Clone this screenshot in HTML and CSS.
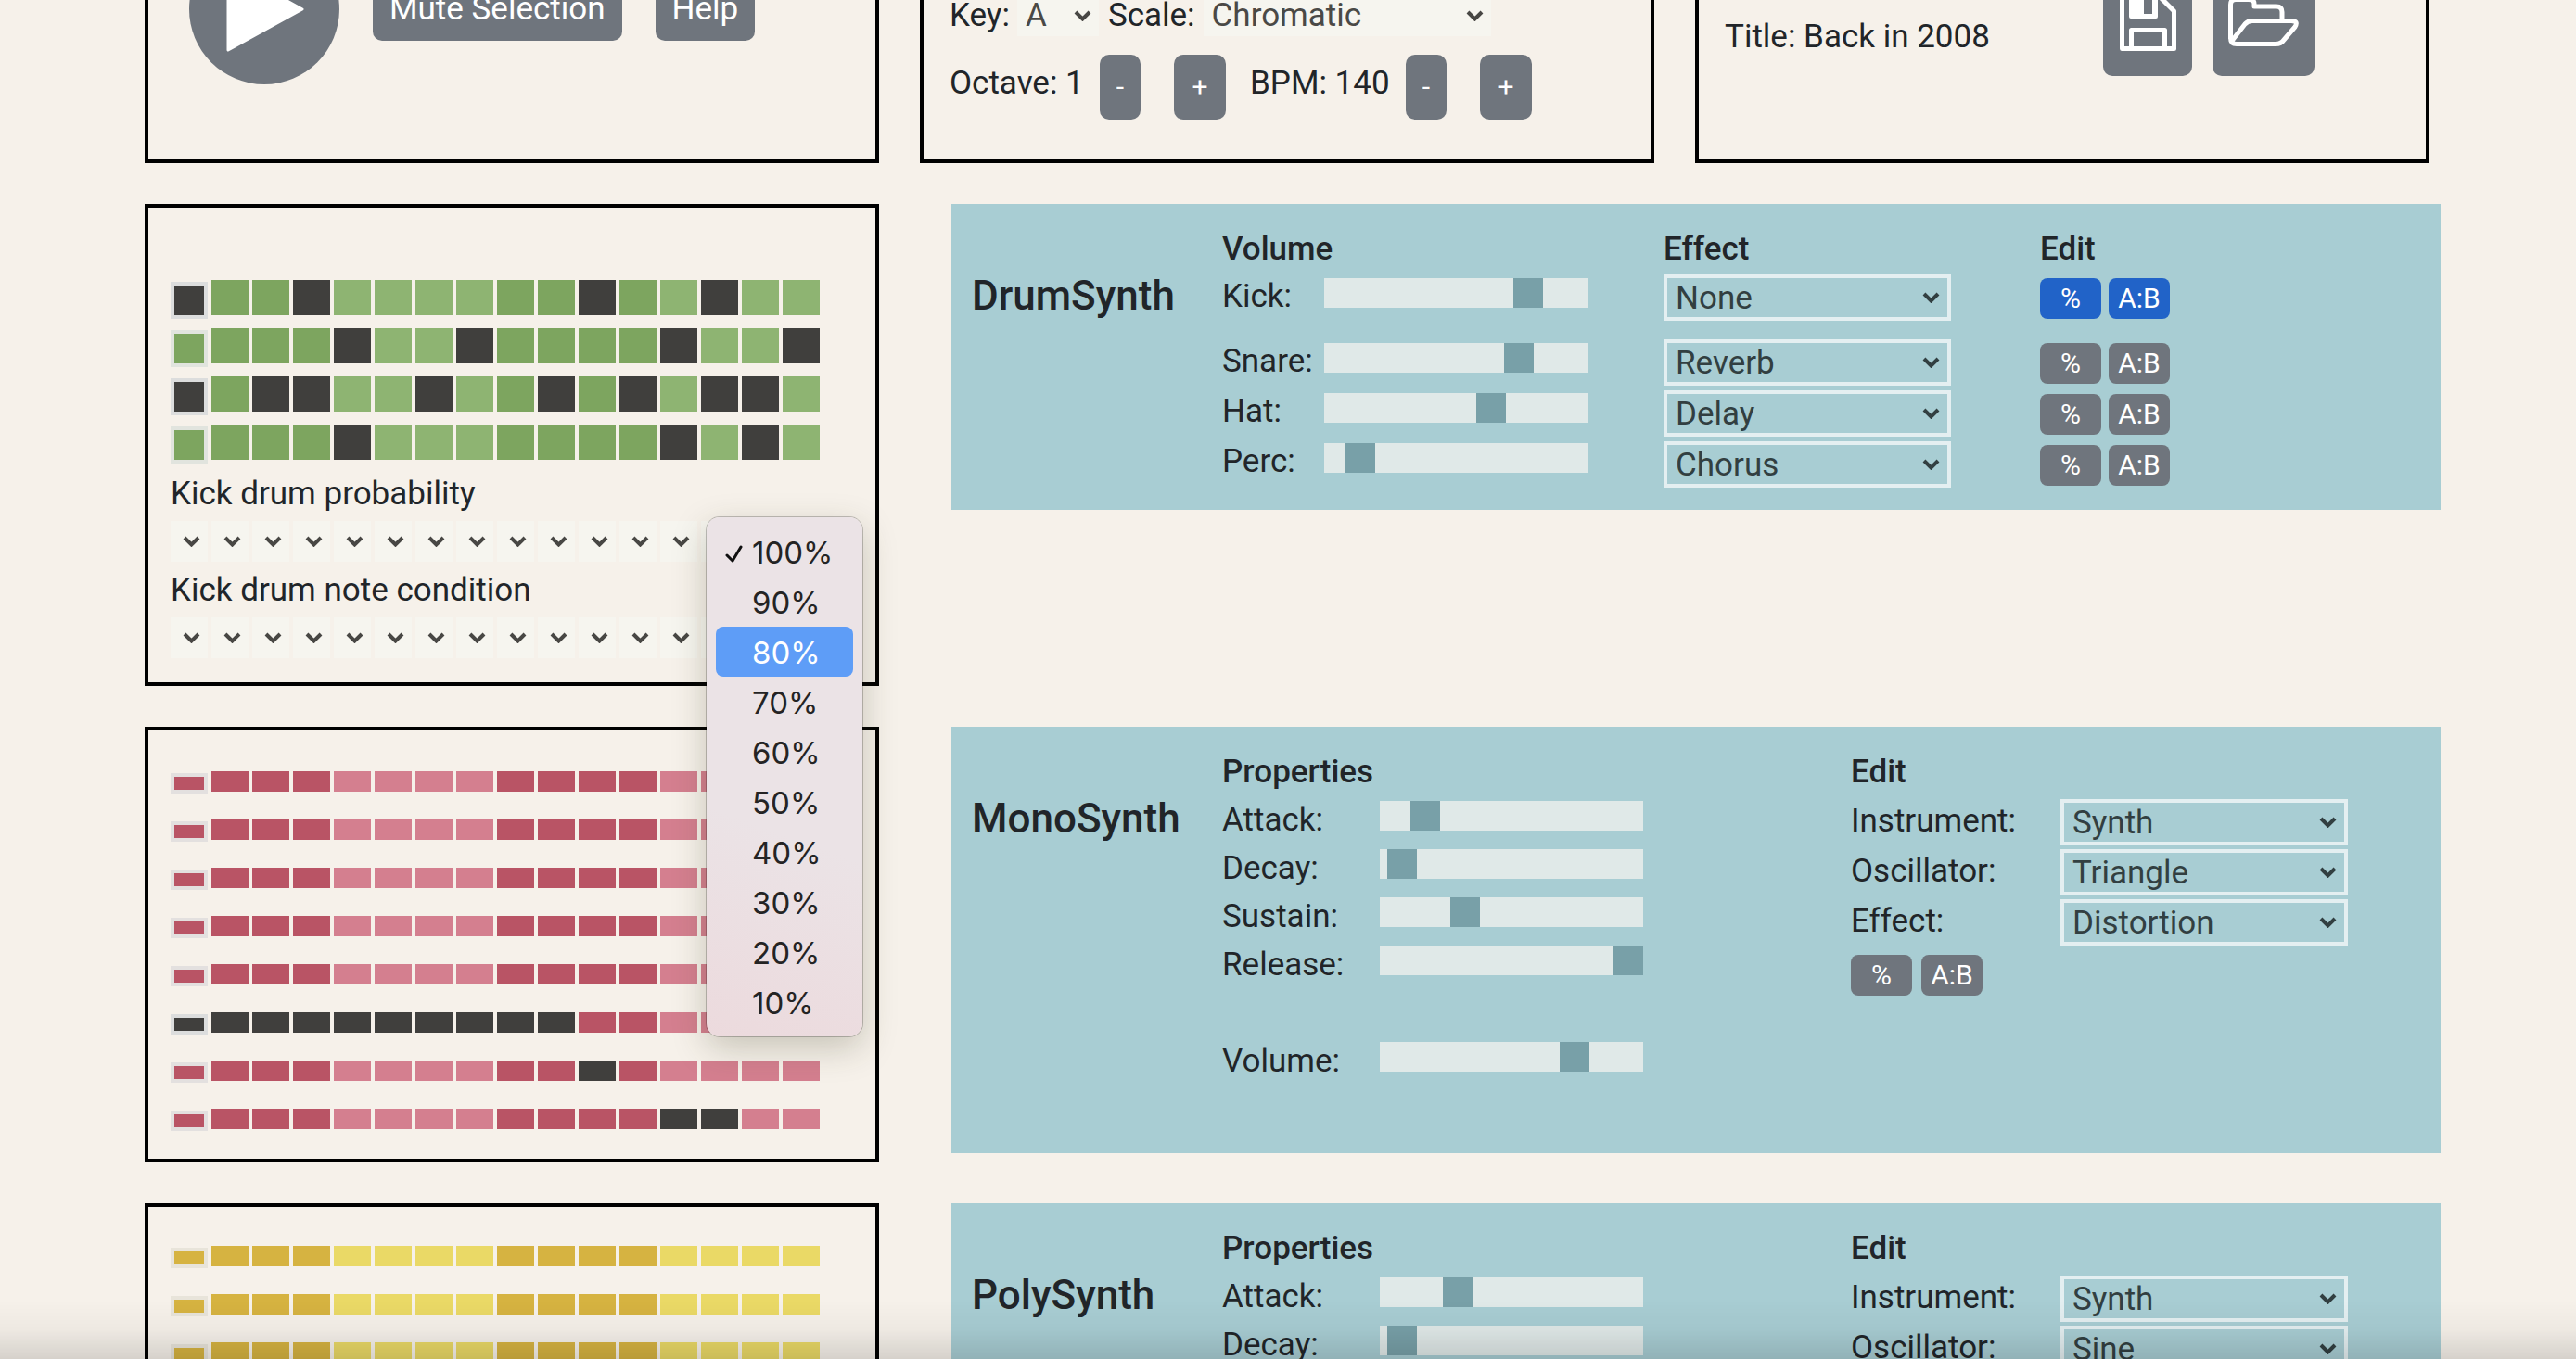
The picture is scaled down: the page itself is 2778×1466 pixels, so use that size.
FILE: index.html
```html
<!DOCTYPE html>
<html lang="en">
<head>
<meta charset="utf-8">
<title>Back in 2008</title>
<link rel="stylesheet" href="styles.css">
<script src="script.js" defer></script>
</head>
<body>
<main class="page">
  <header class="top">
    <section class="card transport">
      <button class="play" type="button" aria-label="Play">
        <svg viewBox="0 0 84 92" width="84" height="92"><path d="M2 2L82 46L2 90Z" fill="#fff" stroke="#fff" stroke-width="3" stroke-linejoin="round"/></svg>
      </button>
      <button class="btn" type="button">Mute Selection</button>
      <button class="btn" type="button">Help</button>
    </section>
    <section class="card tuning">
      <div class="line">
        <label for="key">Key:</label>
        <select id="key" class="pick pick-key"><option>A</option><option>B</option></select>
        <label for="scale">Scale:</label>
        <select id="scale" class="pick pick-scale"><option>Chromatic</option><option>Major</option></select>
      </div>
      <div class="line">
        <span class="octave">Octave: 1</span>
        <button class="btn small minus" type="button">-</button>
        <button class="btn small plus" type="button">+</button>
        <span class="bpm">BPM: 140</span>
        <button class="btn small minus" type="button">-</button>
        <button class="btn small plus" type="button">+</button>
      </div>
    </section>
    <section class="card project">
      <p class="song">Title: Back in 2008</p>
      <button class="btn file save" type="button" aria-label="Save">
        <svg viewBox="0 0 61 61" width="61" height="61" fill="none" stroke="#fff" stroke-width="5" stroke-linejoin="round"><path d="M2.500 2.500H43L58.500 18V58.500H2.500Z"/><path d="M12.500 58V38.500H48.500V58"/><path d="M10 3H41V24Q41 26 39 26H12Q10 26 10 24ZM26 3V21H35V3Z" fill="#fff" fill-rule="evenodd" stroke="none"/></svg>
      </button>
      <button class="btn file open" type="button" aria-label="Open">
        <svg viewBox="0 0 76 62" width="76" height="62" fill="none" stroke="#fff" stroke-width="5" stroke-linejoin="round"><path d="M2.500 48V11Q2.500 5.500 8 5.500H22Q28 5.500 28 10V13H52Q58 13 58 19V28"/><path d="M24 28.500H68Q76 28.500 72 35L60 49Q57 53.500 51 53.500H9Q2.500 53.500 2.500 47M4 50L18 32Q21 28.500 26 28.500"/></svg>
      </button>
    </section>
  </header>

  <div class="synth">
    <section class="card seq drum">
      <div class="steps" data-rows="#..#......#..#.. ....#..#....#..# #.##..#..#.#.##. ....#.......#.#."></div>
      <p class="caption">Kick drum probability</p>
      <div class="conds" data-label="Probability" data-value="100%"></div>
      <p class="caption">Kick drum note condition</p>
      <div class="conds" data-label="Condition" data-value="1:1"></div>
      <ul class="menu" role="listbox" aria-label="Probability">
        <li role="option" aria-selected="true"><svg class="tick" viewBox="0 0 20 20" width="20" height="20"><path d="M2 11L8 17L17 2" fill="none" stroke="#111" stroke-width="3" stroke-linecap="round" stroke-linejoin="round"/></svg>100%</li>
        <li role="option">90%</li>
        <li role="option" class="hover">80%</li>
        <li role="option">70%</li>
        <li role="option">60%</li>
        <li role="option">50%</li>
        <li role="option">40%</li>
        <li role="option">30%</li>
        <li role="option">20%</li>
        <li role="option">10%</li>
      </ul>
    </section>
    <section class="panel mixer">
      <h2>DrumSynth</h2>
      <div class="levels">
        <h3>Volume</h3>
        <div class="row"><label for="kick">Kick:</label><input id="kick" type="range" value="81"></div>
        <div class="row"><label for="snare">Snare:</label><input id="snare" type="range" value="77"></div>
        <div class="row"><label for="hat">Hat:</label><input id="hat" type="range" value="65"></div>
        <div class="row"><label for="perc">Perc:</label><input id="perc" type="range" value="9"></div>
      </div>
      <div class="effects">
        <h3>Effect</h3>
        <div class="row"><select class="box" aria-label="Kick effect"><option>None</option></select></div>
        <div class="row"><select class="box" aria-label="Snare effect"><option>Reverb</option></select></div>
        <div class="row"><select class="box" aria-label="Hat effect"><option>Delay</option></select></div>
        <div class="row"><select class="box" aria-label="Perc effect"><option>Chorus</option></select></div>
      </div>
      <div class="edits">
        <h3>Edit</h3>
        <div class="row"><button class="tag on" type="button">%</button><button class="tag on" type="button">A:B</button></div>
        <div class="row"><button class="tag" type="button">%</button><button class="tag" type="button">A:B</button></div>
        <div class="row"><button class="tag" type="button">%</button><button class="tag" type="button">A:B</button></div>
        <div class="row"><button class="tag" type="button">%</button><button class="tag" type="button">A:B</button></div>
      </div>
    </section>
  </div>

  <div class="synth">
    <section class="card seq mono">
      <div class="steps" data-rows="................ ................ ................ ................ ................ ##########...... ..........#..... ............##.."></div>
    </section>
    <section class="panel voice">
      <h2>MonoSynth</h2>
      <div class="props">
        <h3>Properties</h3>
        <div class="row"><label for="m-attack">Attack:</label><input id="m-attack" type="range" value="13"></div>
        <div class="row"><label for="m-decay">Decay:</label><input id="m-decay" type="range" value="3"></div>
        <div class="row"><label for="m-sustain">Sustain:</label><input id="m-sustain" type="range" value="30"></div>
        <div class="row"><label for="m-release">Release:</label><input id="m-release" type="range" value="100"></div>
        <div class="row apart"><label for="m-volume">Volume:</label><input id="m-volume" type="range" value="77"></div>
      </div>
      <div class="source">
        <h3>Edit</h3>
        <div class="row"><label for="m-inst">Instrument:</label><select id="m-inst" class="box"><option>Synth</option></select></div>
        <div class="row"><label for="m-osc">Oscillator:</label><select id="m-osc" class="box"><option>Triangle</option></select></div>
        <div class="row"><label for="m-fx">Effect:</label><select id="m-fx" class="box"><option>Distortion</option></select></div>
        <div class="row tags"><button class="tag" type="button">%</button><button class="tag" type="button">A:B</button></div>
      </div>
    </section>
  </div>

  <div class="synth">
    <section class="card seq poly">
      <div class="steps" data-rows="................ ................ ................ ................ ................ ................ ................ ................"></div>
    </section>
    <section class="panel voice">
      <h2>PolySynth</h2>
      <div class="props">
        <h3>Properties</h3>
        <div class="row"><label for="p-attack">Attack:</label><input id="p-attack" type="range" value="27"></div>
        <div class="row"><label for="p-decay">Decay:</label><input id="p-decay" type="range" value="3"></div>
      </div>
      <div class="source">
        <h3>Edit</h3>
        <div class="row"><label for="p-inst">Instrument:</label><select id="p-inst" class="box"><option>Synth</option></select></div>
        <div class="row"><label for="p-osc">Oscillator:</label><select id="p-osc" class="box"><option>Sine</option></select></div>
      </div>
    </section>
  </div>
</main>
</body>
</html>
```
FILE: styles.css
```css
* { box-sizing: border-box; }
html { height: 100%; }
body {
  margin: 0;
  height: 100%;
  overflow: hidden;
  background: #f6f1ea;
  color: #212529;
  font: 35px/52px Roboto, sans-serif;
}
/* shade along the lower edge of the window */
body::after {
  content: "";
  position: fixed;
  inset: auto 0 0;
  height: 64px;
  background: linear-gradient(rgba(0,0,0,0), rgba(0,0,0,.03) 50%, rgba(0,0,0,.13));
  pointer-events: none;
}
h2, h3, p, ul { margin: 0; padding: 0; }
button, select { font: inherit; border: 0; margin: 0; }
svg { display: block; }

.page { padding: 0 146px 0 156px; margin-top: -100px; }
.card { border: 4px solid #000; }
.top {
  display: grid;
  grid-template-columns: repeat(3, 1fr);
  gap: 44px;
  margin: 0 12px 44px 0;
}
.top .card { height: 276px; }

.btn { background: #6f757d; color: #fff; border-radius: 10px; padding: 0; }
.transport { display: flex; align-items: center; padding: 0 44px 56px; }
.play {
  width: 162px; height: 162px;
  border-radius: 50%;
  background: #6f757d;
  display: flex; align-items: center;
  padding: 0 0 0 40px;
  margin-right: 36px;
}
.transport .btn { height: 68px; padding: 0 18px; margin-right: 36px; }

.tuning { padding: 87px 28px 0; }
.line { display: flex; align-items: center; }
.line + .line { padding-top: 16px; }
.pick {
  appearance: none;
  height: 44px;
  line-height: 44px;
  padding: 0 0 0 9px;
  color: #4a4946;
  background: #f6f5ef url("data:image/svg+xml,%3Csvg xmlns='http://www.w3.org/2000/svg' width='19' height='12'%3E%3Cpath d='M2 2l7.500 7.500L17 2' fill='none' stroke='%23484744' stroke-width='4'/%3E%3C/svg%3E") no-repeat right 8px center;
}
.pick-key { width: 88px; margin: 0 10px 0 8px; }
.pick-scale { width: 310px; margin-left: 9px; }
.octave { width: 162px; margin-bottom: 8px; }
.bpm { width: 168px; margin-bottom: 8px; }
.small { height: 70px; font-size: 30px; }
.minus { width: 44px; margin-right: 36px; }
.plus { width: 56px; margin-right: 26px; }

.project { display: flex; align-items: flex-start; padding: 63px 28px 0; }
.song { flex: 1; padding-top: 47px; }
.file { height: 115px; display: flex; align-items: center; justify-content: center; }
.save { width: 96px; margin-right: 22px; }
.open { width: 110px; margin-right: 92px; }

.synth {
  display: grid;
  grid-template-columns: 792fr 1606fr;
  column-gap: 78px;
  align-items: start;
  margin-bottom: 44px;
}
.seq { position: relative; padding: 44px 24px 2px; }
.drum { padding: 78px 24px 25px; --dark: #7da55f; --light: #8eb472; --rim: #e1e4de; --h: 38px; }
.mono { --dark: #b95465; --light: #d47f8f; --rim: #e3e0df; --h: 22px; }
.poly { --dark: #d6b341; --light: #ead966; --rim: #e8e4da; --h: 22px; padding-top: 42px; }
.steps, .conds { display: grid; grid-template-columns: repeat(16, 40px); column-gap: 4px; }
.steps { grid-auto-rows: 52px; }
.drum .steps { height: 201px; }
.step { width: 40px; height: var(--h); padding: 0; background: var(--light); }
.step.strong { background: var(--dark); }
.step.on { background: #403f3d; }
.step.first { margin-top: 2px; border: 4px solid var(--rim); }
.drum .step.first { height: 40px; }
.step.first.on { border-color: #dcdddd; }
.caption { padding-top: 6px; height: 52px; line-height: 48px; }
.conds { height: 52px; padding-top: 7px; }
.conds .pick { width: 40px; padding: 0 0 0 40px; }

.menu {
  position: absolute;
  z-index: 2;
  left: 602px;
  top: 334px;
  width: 168px;
  padding: 10px;
  list-style: none;
  border-radius: 14px;
  background: linear-gradient(200deg, #ebe3e6 60%, #ecdadd);
  box-shadow: 0 0 0 1px rgba(0,0,0,.22), 0 12px 36px rgba(60,60,30,.25);
  color: #242424;
  font: 33px/56px Inter, sans-serif;
}
.menu li { position: relative; height: 54px; padding-left: 39px; border-radius: 8px; }
.menu .hover { background: #5e9df7; color: #fff; }
.tick { position: absolute; left: 10px; top: 20px; }

.panel { background: #a8cdd3; display: grid; padding: 23px 0 0 22px; }
.mixer { grid-template-columns: 270fr 476fr 406fr 432fr; height: 330px; }
.voice { grid-template-columns: 270fr 678fr 636fr; height: 460px; }
h2 { font-size: 44px; font-weight: 500; padding-top: 50px; }
h3 { font-size: 35px; font-weight: 500; line-height: 52px; height: 51px; }
.row { display: flex; align-items: flex-start; height: 55px; }
.row label { width: 110px; line-height: 48px; }
.mixer .row { padding-top: 2px; }
.levels .row { height: 54px; }
.mixer h3 + .row { height: 70px; }
.edits .tag { margin-top: 4px; }
.props .row { height: 52px; padding-top: 6px; }
.props .row label { width: 170px; line-height: 42px; }
.props .apart { margin-top: 52px; }
.source .row { height: 54px; padding-top: 4px; }
.source .row label { width: 226px; line-height: 48px; }
.source .tags { padding-top: 10px; }

input[type=range] {
  appearance: none;
  width: 284px;
  height: 32px;
  margin: 0;
  background: #e0e9e8;
}
.mixer input[type=range] { margin-top: 4px; }
input[type=range]::-webkit-slider-thumb {
  appearance: none;
  width: 32px;
  height: 32px;
  background: #78a0a8;
}
.box {
  appearance: none;
  width: 310px;
  height: 50px;
  line-height: 44px;
  padding: 0 0 0 9px;
  border: 4px solid #e4eff1;
  color: #323f41;
  background: url("data:image/svg+xml,%3Csvg xmlns='http://www.w3.org/2000/svg' width='19' height='12'%3E%3Cpath d='M2 2l7.500 7.500L17 2' fill='none' stroke='%23323f41' stroke-width='4'/%3E%3C/svg%3E") no-repeat right 8px center;
}
.tag {
  width: 66px;
  height: 44px;
  padding: 0;
  margin-right: 8px;
  border-radius: 8px;
  background: #6f757d;
  color: #fff;
  font-size: 30px;
  line-height: 44px;
}
.tags .tag { margin-right: 10px; }
.tag.on { background: #2163c8; }
```
FILE: script.js
```js
// Build the step buttons: "#" is a step that plays, "." one that rests.
document.querySelectorAll(".steps").forEach((grid) => {
  grid.dataset.rows.split(" ").forEach((row, r) => {
    [...row.padEnd(16, ".")].forEach((mark, i) => {
      const step = document.createElement("button");
      step.type = "button";
      step.className = "step";
      if (Math.floor(i / 4) % 2 === 0) step.classList.add("strong");
      if (mark === "#") step.classList.add("on");
      if (i === 0) step.classList.add("first");
      step.setAttribute("aria-label", `Row ${r + 1}, step ${i + 1}`);
      step.setAttribute("aria-pressed", mark === "#");
      grid.append(step);
    });
  });
});

// One small drop-down under each step.
document.querySelectorAll(".conds").forEach((grid) => {
  for (let i = 1; i <= 16; i++) {
    const pick = document.createElement("select");
    pick.className = "pick";
    pick.setAttribute("aria-label", `${grid.dataset.label}, step ${i}`);
    pick.add(new Option(grid.dataset.value));
    grid.append(pick);
  }
});
```
